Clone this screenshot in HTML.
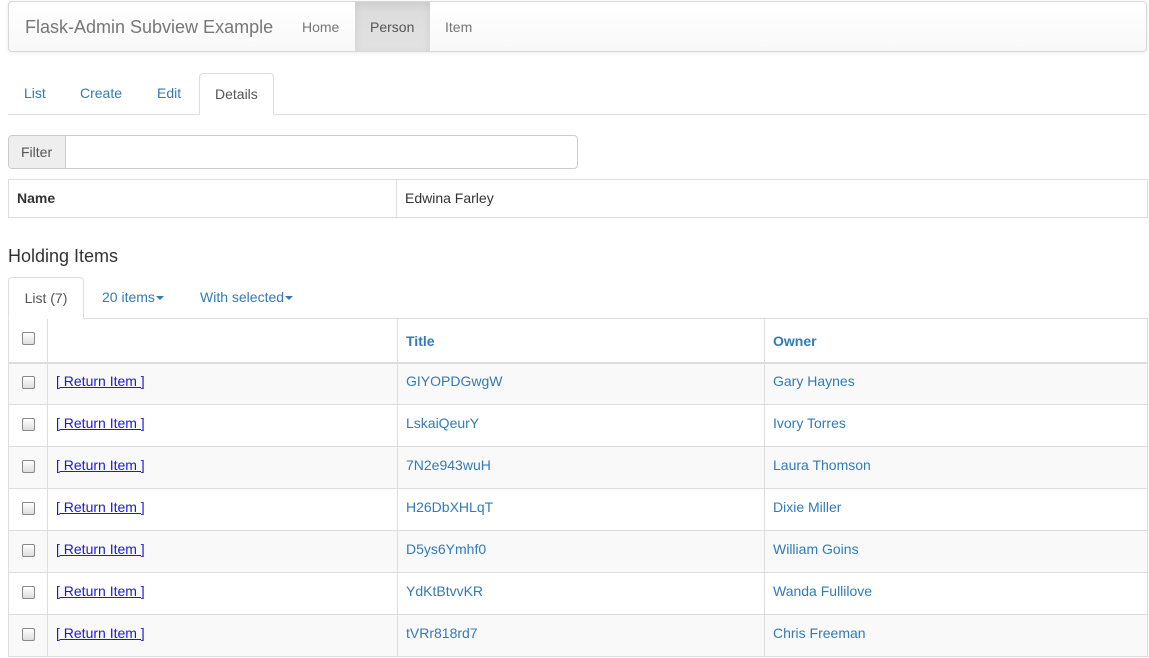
<!DOCTYPE html>
<html><head><style>
*{box-sizing:border-box;margin:0;padding:0}
body{width:1149px;height:658px;overflow:hidden;background:#fff;font-family:"Liberation Sans",Arial,sans-serif;font-size:14px;color:#333;position:relative}
.abs{position:absolute}
a{color:#337ab7;text-decoration:none}
.nav{left:8px;top:1px;width:1139px;height:51px;border:1px solid #d8d8d8;border-radius:4px;background:linear-gradient(#fff,#f8f8f8);box-shadow:0 1px 5px rgba(0,0,0,.08)}
.brand{left:16px;top:15px;font-size:18px;color:#777}
.ni{top:0;height:49px;line-height:51px;color:#777;padding:0 15px}
.tab{height:42px;line-height:41px;padding:0 15px}
.act{border:1px solid #ddd;border-bottom-color:#fff;border-radius:4px 4px 0 0;color:#555;background:#fff}
table{border-collapse:collapse;position:absolute}
td,th{border:1px solid #ddd;text-align:left;vertical-align:middle}
tr.r td{padding-bottom:6px}
tr.r td:first-child{padding-bottom:0}
.cb{display:inline-block;width:13px;height:13px;border:1px solid #888;border-radius:2px;background:linear-gradient(#fff,#ddd)}
.ri{color:#1a1ad6;text-decoration:underline}
.caret{display:inline-block;width:0;height:0;border-top:4px solid #337ab7;border-left:4px solid transparent;border-right:4px solid transparent;vertical-align:middle;margin-left:1px}
</style></head><body>
<div class="abs nav">
<div class="abs brand">Flask-Admin Subview Example</div>
<div class="abs ni" style="left:278px">Home</div>
<div class="abs ni" style="left:346px;width:75px;background:linear-gradient(#dbdbdb,#e2e2e2);box-shadow:inset 0 3px 9px rgba(0,0,0,.08);color:#555">Person</div>
<div class="abs ni" style="left:421px">Item</div>
</div>
<div class="abs" style="left:8px;top:114px;width:1139px;border-top:1px solid #ddd"></div>
<a class="abs tab" style="left:9px;top:73px">List</a>
<a class="abs tab" style="left:65px;top:73px">Create</a>
<a class="abs tab" style="left:142px;top:73px">Edit</a>
<div class="abs tab act" style="left:199px;top:73px;width:75px">Details</div>
<div class="abs" style="left:8px;top:135px;width:570px;height:34px;border:1px solid #ccc;border-radius:4px;overflow:hidden">
<div style="width:57px;height:32px;background:#eee;border-right:1px solid #ccc;line-height:32px;padding-left:12px;color:#555">Filter</div></div>
<table style="left:8px;top:179px;width:1140px">
<tr style="height:38px"><td style="width:388px;padding-left:8px;padding-bottom:2px;font-weight:bold">Name</td><td style="padding-left:8px;padding-bottom:2px">Edwina Farley</td></tr></table>
<div class="abs" style="left:8px;top:246px;font-size:18px">Holding Items</div>
<div class="abs" style="left:83px;top:318px;width:1064px;border-top:1px solid #ddd"></div>
<div class="abs tab act" style="left:8px;top:277px;width:76px;padding:0;text-align:center">List (7)</div>
<a class="abs tab" style="left:87px;top:277px">20 items<span class="caret"></span></a>
<a class="abs tab" style="left:185px;top:277px">With selected<span class="caret"></span></a>
<table style="left:8px;top:318px;width:1140px">
<tr style="height:44px;border-bottom:2px solid #ddd"><th style="width:39px;text-align:center;border-top:none"><span class="cb"></span></th><th style="width:350px;border-top:none"></th><th style="width:367px;padding-left:8px;padding-top:2px;color:#337ab7">Title</th><th style="padding-left:8px;padding-top:2px;color:#337ab7">Owner</th></tr>
<tr class="r" style="height:42px;background:#f9f9f9"><td style="text-align:center"><span class="cb"></span></td><td style="padding-left:8px"><span class="ri">[ Return Item ]</span></td><td style="padding-left:8px"><a>GIYOPDGwgW</a></td><td style="padding-left:8px"><a>Gary Haynes</a></td></tr>
<tr class="r" style="height:42px"><td style="text-align:center"><span class="cb"></span></td><td style="padding-left:8px"><span class="ri">[ Return Item ]</span></td><td style="padding-left:8px"><a>LskaiQeurY</a></td><td style="padding-left:8px"><a>Ivory Torres</a></td></tr>
<tr class="r" style="height:42px;background:#f9f9f9"><td style="text-align:center"><span class="cb"></span></td><td style="padding-left:8px"><span class="ri">[ Return Item ]</span></td><td style="padding-left:8px"><a>7N2e943wuH</a></td><td style="padding-left:8px"><a>Laura Thomson</a></td></tr>
<tr class="r" style="height:42px"><td style="text-align:center"><span class="cb"></span></td><td style="padding-left:8px"><span class="ri">[ Return Item ]</span></td><td style="padding-left:8px"><a>H26DbXHLqT</a></td><td style="padding-left:8px"><a>Dixie Miller</a></td></tr>
<tr class="r" style="height:42px;background:#f9f9f9"><td style="text-align:center"><span class="cb"></span></td><td style="padding-left:8px"><span class="ri">[ Return Item ]</span></td><td style="padding-left:8px"><a>D5ys6Ymhf0</a></td><td style="padding-left:8px"><a>William Goins</a></td></tr>
<tr class="r" style="height:42px"><td style="text-align:center"><span class="cb"></span></td><td style="padding-left:8px"><span class="ri">[ Return Item ]</span></td><td style="padding-left:8px"><a>YdKtBtvvKR</a></td><td style="padding-left:8px"><a>Wanda Fullilove</a></td></tr>
<tr class="r" style="height:42px;background:#f9f9f9"><td style="text-align:center"><span class="cb"></span></td><td style="padding-left:8px"><span class="ri">[ Return Item ]</span></td><td style="padding-left:8px"><a>tVRr818rd7</a></td><td style="padding-left:8px"><a>Chris Freeman</a></td></tr>
</table>
</body></html>
